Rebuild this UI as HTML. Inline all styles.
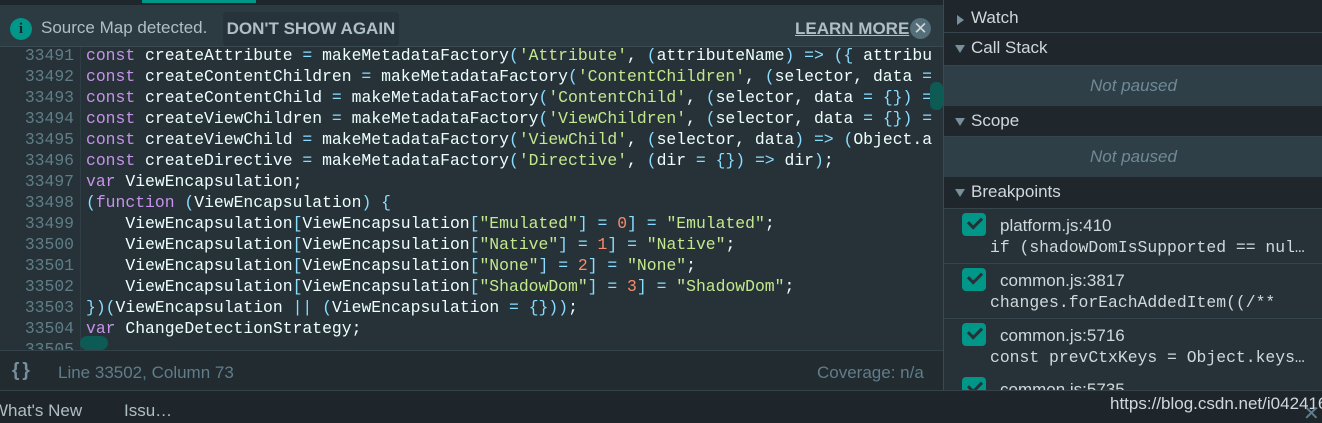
<!DOCTYPE html>
<html><head><style>
*{margin:0;padding:0;box-sizing:border-box}
html,body{width:1322px;height:423px;overflow:hidden}
body{background:#263238;font-family:"Liberation Sans",sans-serif;position:relative}
.top{position:absolute;left:0;top:0;width:943px;height:5px;background:#1e272c}
.tabbar{position:absolute;left:142px;top:0;width:114px;height:3px;background:#009688}
.banner{position:absolute;left:0;top:5px;width:943px;height:42px;background:#2c3a41;border-bottom:1px solid #3a4a52}
.info{position:absolute;left:10px;top:13px;width:22px;height:22px;border-radius:50%;background:#009688;color:#1e272c;font:bold 15px "Liberation Serif",serif;text-align:center;line-height:22px}
.bt{position:absolute;top:13px;font-size:17px;color:#b0bec5}
.btn{position:absolute;left:223px;top:7px;width:176px;height:34px;background:#26333a;border-radius:4px;font-weight:bold;color:#b0bec5;font-size:17px;line-height:34px;text-align:center}
.lm{position:absolute;left:795px;top:14px;font-weight:bold;font-size:17px;color:#b0bec5;text-decoration:underline}
.x{position:absolute;left:910px;top:13px;width:21px;height:21px;border-radius:50%;background:#546e7a;color:#cfd8dc;text-align:center;font-size:17px;line-height:21px}
.code{position:absolute;left:0;top:47px;width:943px;height:303px;overflow:hidden;font-family:"Liberation Mono",monospace;font-size:16.4px;line-height:21px;white-space:pre}
.ln{position:absolute;left:0;top:-2px;width:74px;text-align:right;color:#5f7e88}
.gut{position:absolute;left:80px;top:0;width:1px;height:303px;background:#2f3d44}
.src{position:absolute;left:86px;top:-2px;color:#eeffff}
.k{color:#c792ea}.s{color:#c3e88d}.n{color:#f78c6c}.p{color:#89ddff}
.sb{position:absolute;left:930px;top:35px;width:13px;height:28px;background:#0e5a55;border-radius:6px}
.hsb{position:absolute;left:80px;top:336px;width:28px;height:14px;background:#0e5a55;border-radius:7px}
.status{position:absolute;left:0;top:350px;width:943px;height:40px;background:#222b30;border-top:1px solid #34434a;color:#607d8b;font-size:17px}
.drawer{position:absolute;left:0;top:390px;width:1322px;height:33px;background:#1e262b;border-top:1px solid #34434a;color:#b0bec5;font-size:17px}
.right{position:absolute;left:943px;top:0;width:379px;height:391px;background:#1f272c;border-left:1px solid #3a4a52;color:#cfd8dc;font-size:17px;overflow:hidden}
.hd{position:absolute;left:0;width:379px;border-bottom:1px solid #36454c}
.hd span{position:absolute;left:27px;top:5px}
.tri{position:absolute;left:11px;top:12px;width:0;height:0;border-left:5px solid transparent;border-right:5px solid transparent;border-top:8px solid #78909c}
.trr{position:absolute;left:13px;top:10px;border-top:5px solid transparent;border-bottom:5px solid transparent;border-left:7px solid #78909c}
.np{position:absolute;left:0;width:379px;background:#2e3f47;color:#6f8a96;font-style:italic;text-align:center}
.bp{position:absolute;left:0;width:379px;height:55px;background:#263238;border-bottom:1px solid #36454c}
.cb{position:absolute;left:18px;top:4px;width:24px;height:23px;border-radius:4px;background:#009688}
.cb:after{content:"";position:absolute;left:6px;top:4px;width:11px;height:6px;border-left:3px solid #263238;border-bottom:3px solid #263238;transform:rotate(-45deg)}
.bn{position:absolute;left:56px;top:7px}
.bc{position:absolute;left:46px;top:29px;font-family:"Liberation Mono",monospace;font-size:16.4px;color:#cfd8dc;white-space:pre}
</style></head><body>
<div class="top"></div><div class="tabbar"></div>
<div class="banner">
<div class="info">i</div>
<div class="bt" style="left:41px">Source Map detected.</div>
<div class="btn">DON'T SHOW AGAIN</div>
<div class="lm">LEARN MORE</div>
<div class="x">✕</div>
</div>
<div class="code">
<div class="ln">33491
33492
33493
33494
33495
33496
33497
33498
33499
33500
33501
33502
33503
33504
33505</div>
<div class="gut"></div>
<div class="src"><span class="k">const</span> createAttribute <span class="p">=</span> makeMetadataFactory<span class="p">(</span><span class="s">'Attribute'</span>, <span class="p">(</span>attributeName<span class="p">)</span> <span class="p">=&gt;</span> <span class="p">({</span> attribu
<span class="k">const</span> createContentChildren <span class="p">=</span> makeMetadataFactory<span class="p">(</span><span class="s">'ContentChildren'</span>, <span class="p">(</span>selector, data <span class="p">=</span>
<span class="k">const</span> createContentChild <span class="p">=</span> makeMetadataFactory<span class="p">(</span><span class="s">'ContentChild'</span>, <span class="p">(</span>selector, data <span class="p">=</span> <span class="p">{})</span> <span class="p">=</span>
<span class="k">const</span> createViewChildren <span class="p">=</span> makeMetadataFactory<span class="p">(</span><span class="s">'ViewChildren'</span>, <span class="p">(</span>selector, data <span class="p">=</span> <span class="p">{})</span> <span class="p">=</span>
<span class="k">const</span> createViewChild <span class="p">=</span> makeMetadataFactory<span class="p">(</span><span class="s">'ViewChild'</span>, <span class="p">(</span>selector, data<span class="p">)</span> <span class="p">=&gt;</span> <span class="p">(</span>Object.a
<span class="k">const</span> createDirective <span class="p">=</span> makeMetadataFactory<span class="p">(</span><span class="s">'Directive'</span>, <span class="p">(</span>dir <span class="p">=</span> <span class="p">{})</span> <span class="p">=&gt;</span> dir<span class="p">)</span>;
<span class="k">var</span> ViewEncapsulation;
<span class="p">(</span><span class="k">function</span> <span class="p">(</span>ViewEncapsulation<span class="p">)</span> <span class="p">{</span>
    ViewEncapsulation<span class="p">[</span>ViewEncapsulation<span class="p">[</span><span class="s">"Emulated"</span><span class="p">]</span> <span class="p">=</span> <span class="n">0</span><span class="p">]</span> <span class="p">=</span> <span class="s">"Emulated"</span>;
    ViewEncapsulation<span class="p">[</span>ViewEncapsulation<span class="p">[</span><span class="s">"Native"</span><span class="p">]</span> <span class="p">=</span> <span class="n">1</span><span class="p">]</span> <span class="p">=</span> <span class="s">"Native"</span>;
    ViewEncapsulation<span class="p">[</span>ViewEncapsulation<span class="p">[</span><span class="s">"None"</span><span class="p">]</span> <span class="p">=</span> <span class="n">2</span><span class="p">]</span> <span class="p">=</span> <span class="s">"None"</span>;
    ViewEncapsulation<span class="p">[</span>ViewEncapsulation<span class="p">[</span><span class="s">"ShadowDom"</span><span class="p">]</span> <span class="p">=</span> <span class="n">3</span><span class="p">]</span> <span class="p">=</span> <span class="s">"ShadowDom"</span>;
<span class="p">})(</span>ViewEncapsulation <span class="p">||</span> <span class="p">(</span>ViewEncapsulation <span class="p">=</span> <span class="p">{}))</span>;
<span class="k">var</span> ChangeDetectionStrategy;</div>
<div class="sb"></div>
</div>
<div class="hsb"></div>
<div class="status">
<div style="position:absolute;left:12px;top:9px;font-weight:bold;color:#78909c;font-size:19px;letter-spacing:3px">{}</div>
<div style="position:absolute;left:58px;top:12px">Line 33502, Column 73</div>
<div style="position:absolute;left:817px;top:12px">Coverage: n/a</div>
</div>
<div class="right">
<div class="hd" style="top:5px;height:28px"><div class="trr"></div><span style="top:3px">Watch</span></div>
<div class="hd" style="top:33px;height:33px"><div class="tri"></div><span>Call Stack</span></div>
<div class="np" style="top:66px;height:40px;line-height:40px">Not paused</div>
<div class="hd" style="top:106px;height:31px"><div class="tri"></div><span>Scope</span></div>
<div class="np" style="top:137px;height:40px;line-height:40px">Not paused</div>
<div class="hd" style="top:177px;height:32px"><div class="tri"></div><span>Breakpoints</span></div>
<div class="bp" style="top:209px"><div class="cb"></div><div class="bn">platform.js:410</div><div class="bc">if (shadowDomIsSupported == nul…</div></div>
<div class="bp" style="top:264px"><div class="cb"></div><div class="bn">common.js:3817</div><div class="bc">changes.forEachAddedItem((/**</div></div>
<div class="bp" style="top:319px"><div class="cb"></div><div class="bn">common.js:5716</div><div class="bc">const prevCtxKeys = Object.keys…</div></div>
<div class="bp" style="top:373px"><div class="cb"></div><div class="bn">common.js:5735</div></div>
</div>
<div class="drawer">
<div style="position:absolute;left:-8px;top:10px">What's New</div>
<div style="position:absolute;left:124px;top:10px">Issu…</div>
<div style="position:absolute;left:1110px;top:3px;color:#cfd8dc;font-size:17px">https://blog.csdn.net/i042416</div>
<div style="position:absolute;left:1303px;top:10px;color:#607d8b;font-size:20px">✕</div>
</div>
</body></html>
